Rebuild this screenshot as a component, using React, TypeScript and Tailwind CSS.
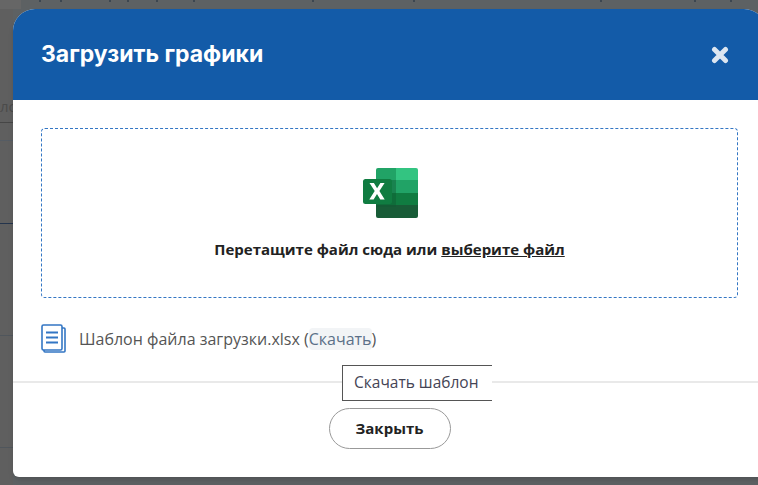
const Excel = () => (
  <svg width="56" height="50" viewBox="0 0 56 50">
    <path d="M14 2a2 2 0 0 1 2-2h18v12H14z" fill="#21a366" />
    <path d="M34 0h20a2 2 0 0 1 2 2v10H34z" fill="#33c481" />
    <rect x="14" y="12" width="42" height="13" fill="#21a366" />
    <rect x="14" y="25" width="42" height="12" fill="#107c41" />
    <path d="M14 37h42v11a2 2 0 0 1-2 2H16a2 2 0 0 1-2-2z" fill="#185c37" />
    <rect x="14" y="12" width="20" height="27" fill="#0f5c34" opacity="0.45" />
    <rect x="1" y="11" width="29" height="25" rx="2.5" fill="#107c41" />
    <path d="M7.5 15h4.4l3.2 5.2 3.3-5.2h4.2l-5.2 8 5.3 8.5h-4.4l-3.3-5.5-3.4 5.5H7.3l5.4-8.4z" fill="#fff" />
  </svg>
);

const DocIcon = () => (
  <svg width="25" height="29" viewBox="0 0 25 29" fill="none" stroke="#3376c4" strokeWidth="1.6">
    <path d="M3 26v1a1 1 0 0 0 1 1h19a1 1 0 0 0 1-1V5a1 1 0 0 0-1-1h-2" />
    <rect x="1" y="1" width="20" height="25" rx="1.5" fill="#fff" />
    <path d="M5 8.5h12M5 13.5h12M5 18.5h12" strokeWidth="1.8" />
  </svg>
);

// what shows of the page behind the dialog
const TopStrip = () => (
  <svg width="758" height="9" className="block">
    <rect width="21" height="9" fill="#666666" />
    {[39, 60, 109, 127, 156, 193, 312, 413, 600, 694, 730].map((x) => (
      <rect key={x} x={x} y="0" width="2" height="2" fill="#3c4650" />
    ))}
  </svg>
);

export default function App() {
  return (
    <div className="h-[485px] w-[758px] overflow-hidden bg-[#5d6163] font-['Open_Sans',sans-serif]">
      <TopStrip />
      <div className="flex">
        <div className="flex h-[476px] w-[13px] shrink-0 flex-col overflow-hidden bg-[#5f5f5f]">
          <div className="h-[87px]" />
          <div className="h-[20px] text-[15px] leading-[20px] whitespace-nowrap text-[#4b4b4b]">ло</div>
          <div className="h-[7px] border-b border-[#464646]" />
          <div className="h-[18px] border-b border-[#555c64]" />
          <div className="h-[83px] border-b border-[#24344c]" />
          <div className="h-[112px] border-b border-[#50565c]" />
          <div className="h-[112px] border-b border-[#50565c]" />
        </div>

        <div className="relative flex h-[468px] w-[753px] shrink-0 flex-col overflow-hidden rounded-t-[22px] rounded-b-md bg-white shadow-md">
          <header className="flex h-[91px] shrink-0 items-center justify-between bg-[#135ba8] pl-[28px] pr-[37px]">
            <h1 className="font-['Inter',sans-serif] text-[23px] font-bold text-white">Загрузить графики</h1>
            <svg width="18" height="18" viewBox="0 0 18 18">
              <path d="M3.5 3.5l11 11M14.5 3.5l-11 11" stroke="#dce6f1" strokeWidth="5" strokeLinecap="round" />
            </svg>
          </header>

          <div className="mx-[28px] mt-[28px] flex h-[170px] flex-col items-center rounded border-[1.5px] border-dashed border-[#3376c4] pt-[39px]">
            <Excel />
            <p className="mt-[20px] text-[15px] font-bold text-[#222]">
              Перетащите файл сюда или <span className="underline">выберите файл</span>
            </p>
          </div>

          <div className="ml-[28px] mt-[26px] flex items-center gap-[13px] text-base text-[#555]">
            <DocIcon />
            <span>
              Шаблон файла загрузки.xlsx (<span className="rounded bg-[#f2f4f6] text-[#5b7088]">Скачать</span>)
            </span>
          </div>

          <div className="mt-[28px] flex-1 border-t-2 border-[#e9e9e9] pt-[25px]">
            <button className="mx-auto block h-[41px] w-[122px] rounded-full border border-[#999] bg-white text-[15px] font-bold text-[#222]">
              Закрыть
            </button>
          </div>

          <div className="absolute left-[329px] top-[356px] flex h-[36px] w-[150px] items-center border-y border-l border-[#555] bg-white pl-[11px] text-[15.5px] text-[#445]">
            Скачать шаблон
          </div>
        </div>
      </div>
    </div>
  );
}
